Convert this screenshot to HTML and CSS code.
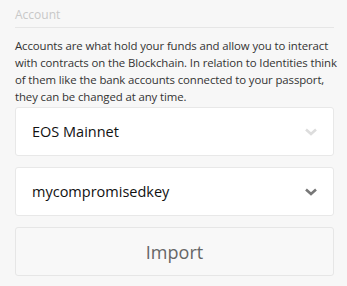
FILE: index.html
```html
<!DOCTYPE html>
<html lang="en">
<head>
    <meta charset="UTF-8">
    <title>Account</title>
    <link rel="stylesheet" href="styles.css">
</head>
<body>
    <div class="panel">
        <div class="section-title">Account</div>
        <p class="description">Accounts are what hold your funds and allow you to interact with contracts on the Blockchain. In relation to Identities think<br>of them like the bank accounts connected to your passport, they can be changed at any time.</p>

        <div class="select">
            <span class="select-text">EOS Mainnet</span>
            <svg class="chevron light" width="12" height="8" viewBox="0 0 12 8"><path d="M1 1.5 L6 6 L11 1.5" fill="none" stroke="currentColor" stroke-width="2.6"/></svg>
        </div>
        <div class="select">
            <span class="select-text">mycompromisedkey</span>
            <svg class="chevron" width="12" height="8" viewBox="0 0 12 8"><path d="M1 1.5 L6 6 L11 1.5" fill="none" stroke="currentColor" stroke-width="2.6"/></svg>
        </div>
        <button class="import-btn">Import</button>
    </div>
</body>
</html>
```

FILE: styles.css
```css
body {
    margin: 0;
    background: #f7f7f7;
    font-family: "Open Sans", sans-serif;
}
.panel {
    padding: 6px 0 0 15px;
}
.section-title {
    margin-right: 13px;
    font-size: 12px;
    color: #c8c8c8;
    line-height: 18px;
    padding-bottom: 3px;
    border-bottom: 1px solid #e6e6e6;
}
.description {
    margin: 9px 7px 2px 0;
    font-size: 11.4px;
    letter-spacing: -0.1px;
    line-height: 17px;
    color: #333;
}
.select {
    display: flex;
    align-items: center;
    justify-content: space-between;
    height: 47px;
    padding: 0 16px;
    margin: 0 13px 11px 0;
    background: #fff;
    border: 1px solid #e8e8e8;
    border-radius: 3px;
}
.select-text {
    font-family: "Open Sans", sans-serif;
    font-size: 14.5px;
    color: #111;
}
.chevron {
    color: #777;
}
.chevron.light {
    color: #ddd;
}
.import-btn {
    display: block;
    width: calc(100% - 13px);
    height: 49px;
    background: #f8f8f8;
    border: 1px solid #e6e6e6;
    border-radius: 3px;
    font-family: "Open Sans", sans-serif;
    font-size: 18px;
    color: #666;
}
```
